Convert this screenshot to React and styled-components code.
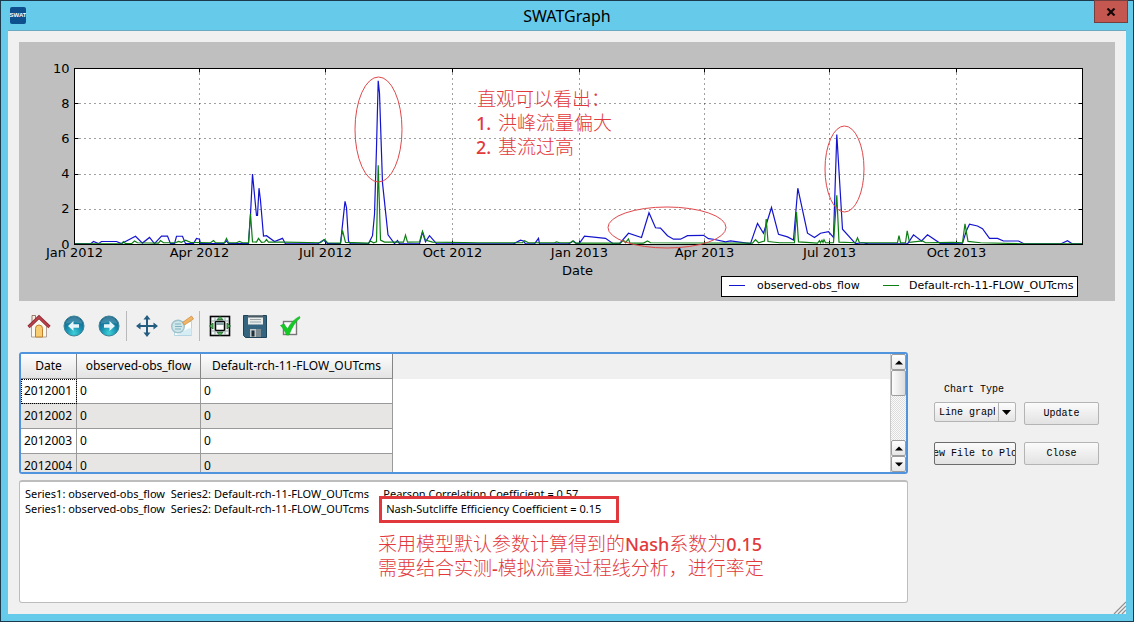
import React from "react";
import styled, { createGlobalStyle, css } from "styled-components";

const uiFont = `"Noto Sans", "Noto Sans CJK SC", sans-serif`;
const monoFont = `"Liberation Mono", "Noto Sans CJK SC", monospace`;

const GlobalStyle = createGlobalStyle`
  *, *::before, *::after { box-sizing: border-box; }
  body { margin: 0; background: #66cbea; font-family: ${uiFont}; color: #000; }
`;

const Window = styled.div`
  min-height: 100vh;
  display: flex;
  flex-direction: column;
  padding: 0 7px 7px;
  background: #66cbea;
  border: 1px solid #1b3a4d;
`;

const TitleBar = styled.header`
  position: relative;
  height: 29px;
  display: flex;
  align-items: center;
  justify-content: center;
`;

const AppIcon = styled.svg`
  position: absolute;
  left: 2px;
  top: 6px;
`;

const Title = styled.h1`
  margin: 0;
  font-size: 16px;
  font-weight: 400;
  line-height: 20px;
`;

const CloseBox = styled.button`
  position: absolute;
  top: -1px;
  right: -2px;
  width: 34px;
  height: 23px;
  padding: 0;
  display: grid;
  place-items: center;
  background: #c4574f;
  border: 1px solid #74403f;
`;

const Client = styled.main`
  position: relative;
  flex: 1;
  display: flex;
  flex-direction: column;
  padding: 11px;
  background: #f0f0f0;
  border-top: 1px solid #6ba9c2;
`;

const ChartSvg = styled.svg`
  display: block;
  width: 100%;
  height: auto;
  background: #bfbfbf;
  font-family: "DejaVu Sans", sans-serif;
`;

const Note = styled.text`
  font-family: "Noto Sans CJK SC", sans-serif;
  font-size: 19px;
  font-weight: 300;
  fill: #e2393c;
`;

const NoteLatin = styled.tspan`
  font-family: "Noto Sans", sans-serif;
  font-size: 18px;
  font-weight: 500;
`;

const ToolBar = styled.div`
  display: flex;
  align-items: center;
  height: 51px;
  padding: 0 0 1px 2px;
`;

const ToolButton = styled.button`
  width: 35px;
  height: 30px;
  padding: 0;
  border: 0;
  background: none;
  display: grid;
  place-items: center;
`;

const ToolDivider = styled.span`
  width: 3px;
  height: 30px;
  border-left: 1px solid #b9b9b9;
`;

const Lower = styled.div`
  flex: 1;
  display: grid;
  grid-template-columns: minmax(0, 1fr) 165px;
  column-gap: 26px;
  padding-right: 16px;
`;

const Panels = styled.div`
  display: flex;
  flex-direction: column;
  gap: 6px;
`;

const TablePanel = styled.div`
  display: flex;
  height: 122px;
  overflow: hidden;
  background: #fff;
  border: 2px solid #4f94dd;
  border-radius: 3px;
`;

const TableClip = styled.div`
  flex: 1;
  overflow: hidden;
`;

const DataTable = styled.table`
  width: 100%;
  table-layout: fixed;
  border-collapse: separate;
  border-spacing: 0;
  font-size: 12px;
  line-height: 16px;
`;

const HeadCell = styled.th`
  width: ${(p) => p.$width || "auto"};
  height: 25px;
  padding: 0;
  font-size: 12px;
  font-weight: 400;
  white-space: nowrap;
  background: linear-gradient(#fdfdfd, #e3e3e3);
  border-right: 1px solid #858585;
  border-bottom: 1px solid #8f8f8f;
  ${(p) =>
    p.$blank &&
    css`
      background: #f0f0f0;
      border: 0;
    `}
`;

const Cell = styled.td`
  height: 25px;
  padding: 0 3px;
  background: ${(p) => (p.$alt ? "#e8e6e4" : "#fff")};
  border-right: 1px solid #9a9a9a;
  border-bottom: 1px solid #9a9a9a;
  ${(p) =>
    p.$focused &&
    css`
      outline: 1px dotted #000;
      outline-offset: -1px;
    `}
`;

const ScrollBar = styled.div`
  width: 16px;
  display: flex;
  flex-direction: column;
  background: repeating-conic-gradient(#dcdcdc 0 25%, #fafafa 0 50%) 0 0 / 2px 2px;
  border-left: 1px solid #c8c8c8;
`;

const ScrollButton = styled.button`
  height: 16px;
  padding: 0;
  display: grid;
  place-items: center;
  background: linear-gradient(#fff, #e6e6e6);
  border: 1px solid #9c9c9c;
  border-radius: 2px;
`;

const Thumb = styled.div`
  height: 26px;
  margin-bottom: auto;
  background: linear-gradient(90deg, #fcfcfc, #dcdcdc);
  border: 1px solid #9c9c9c;
  border-radius: 2px;
`;

const LogPanel = styled.div`
  position: relative;
  flex: 1;
  min-height: 123px;
  display: flex;
`;

const LogText = styled.textarea`
  flex: 1;
  padding: 4px 5px;
  resize: none;
  overflow: hidden;
  white-space: pre;
  font-family: ${uiFont};
  font-size: 11px;
  line-height: 15px;
  color: #000;
  background: #fff;
  border: 1px solid #bdbdbd;
  border-top-width: 2px;
  border-radius: 3px;
  outline: 0;
`;

const Highlight = styled.div`
  position: absolute;
  left: 360px;
  top: 16px;
  width: 240px;
  height: 27px;
  border: 3px solid #e0383c;
`;

const LogNote = styled.svg`
  position: absolute;
  left: 356px;
  top: 51px;
  overflow: visible;
`;

const Controls = styled.form`
  display: grid;
  grid-template-columns: 82px 75px;
  grid-template-rows: 43px 23px;
  column-gap: 8px;
  row-gap: 17px;
  align-content: start;
  align-items: end;
  padding-top: 30px;
  font-family: ${monoFont};
  font-size: 10px;
`;

const Field = styled.div`
  align-self: start;
  display: flex;
  flex-direction: column;
  gap: 4px;
`;

const FieldLabel = styled.label`
  padding-left: 10px;
  line-height: 16px;
`;

const Combo = styled.div`
  position: relative;
  height: 20px;
`;

const ComboSelect = styled.select`
  appearance: none;
  display: block;
  width: 100%;
  height: 20px;
  padding: 0 20px 0 4px;
  font-family: ${monoFont};
  font-size: 10px;
  color: #000;
  background: linear-gradient(#fdfdfd, #e4e4e4);
  border: 1px solid #b4b4b4;
  border-radius: 2px;
`;

const ComboArrow = styled.svg`
  position: absolute;
  right: 1px;
  top: 1px;
  pointer-events: none;
`;

const PushButton = styled.button`
  height: 23px;
  padding: 0;
  display: flex;
  align-items: center;
  justify-content: center;
  overflow: hidden;
  white-space: nowrap;
  font-family: ${monoFont};
  font-size: 10px;
  color: #000;
  background: linear-gradient(#fbfbfb, #e2e2e2);
  border: 1px solid ${(p) => (p.$primary ? "#6c6c6c" : "#b4b4b4")};
  border-radius: 2px;
`;

const SizeGrip = styled.svg`
  position: absolute;
  right: 0;
  bottom: 0;
`;

/* Horizontal positions are plot pixels from the left axis, values are m3/s. */
const observed = [
  [0, 0.05], [16, 0.03], [19, 0.17], [24, 0.05], [27, 0.17], [42, 0.17], [47, 0.05], [51, 0.17],
  [61, 0.47], [68, 0.08], [75, 0.4], [80, 0.05], [87, 0.48], [93, 0.48], [96, 0.05], [100, 0.05],
  [102, 0.47], [108, 0.47], [111, 0.05], [119, 0.05], [122, 0.34], [125, 0.3], [126, 0.05],
  [149, 0.05], [152, 0.2], [154, 0.05], [174, 0.05], [176, 1.7], [178, 4], [182, 1.65], [183, 1.65],
  [184.5, 3.2], [186, 2.5], [189, 0.48], [192, 0.5], [200, 0.17], [208, 0.35], [211, 0.03],
  [243, 0.03], [249, 0.25], [253, 0.05], [266, 0.05], [270.5, 2.45], [272, 2.1], [274, 0.2],
  [276, 0.04], [294, 0.05], [298, 0.5], [300, 1.7], [302, 5.5], [303.7, 9.3], [305, 8.6],
  [308, 3.5], [313.5, 0.55], [320, 0.05], [323, 0.23], [325, 0.04], [345, 0.04], [348, 0.7],
  [351, 0.15], [355, 0.5], [362, 0.05], [439, 0.04], [446, 0.25], [449, 0.2], [451, 0.04],
  [460, 0.04], [464, 0.35], [465, 0.04], [494, 0.04], [499, 0.2], [502, 0.05], [505, 0.08],
  [510, 0.47], [531, 0.35], [539, 0.03], [545, 0.05], [554, 0.64], [567, 0.4], [574.5, 1.8],
  [581, 0.95], [586, 0.93], [593, 0.5], [599, 0.3], [606, 0.3], [613, 0.5], [629, 0.52],
  [634, 0.33], [639, 0.3], [651, 0.15], [656, 0.2], [676, 0.05], [683, 1.2], [689, 0.64],
  [697, 2.1], [704, 0.58], [713, 0.43], [719, 0.25], [723.3, 3.2], [733, 0.64], [740, 0.4],
  [746, 0.64], [754, 0.73], [759, 0.4], [762.3, 6.25], [768, 0.87], [781, 0.05], [788, 0.1],
  [794, 0.04], [833, 0.04], [839, 0.55], [847, 0.2], [853, 0.55], [866, 0.05], [888, 0.08],
  [892, 0.8], [895, 1.15], [903, 1.05], [908, 0.9], [915, 0.35], [923, 0.35], [929, 0.2],
  [944, 0.2], [950, 0.03], [986, 0.03], [993, 0.22], [998, 0.03], [1008, 0.03],
];

const simulated = [
  [0, 0.03], [47, 0.05], [49, 0.17], [51, 0.05], [57, 0.05], [60, 0.2], [63, 0.1], [84, 0.08],
  [86, 0.22], [89, 0.1], [101, 0.1], [104, 0.18], [107, 0.12], [111, 0.25], [116, 0.12],
  [136, 0.1], [139, 0.22], [141, 0.1], [150, 0.1], [152, 0.35], [154, 0.1], [162, 0.1],
  [165, 0.17], [168, 0.1], [174, 0.1], [176, 1.75], [178, 0.15], [182, 0.14], [184, 0.35],
  [187, 0.12], [190, 0.14], [192, 0.28], [194, 0.14], [209, 0.14], [246, 0.1], [250, 0.28],
  [253, 0.1], [266, 0.08], [268, 0.8], [271, 0.12], [294, 0.08], [296, 0.2], [299, 0.1],
  [302, 0.15], [303.7, 4.5], [306, 0.25], [310, 0.14], [329, 0.13], [331, 0.53], [333, 0.13],
  [345, 0.15], [348, 0.75], [351, 0.25], [358, 0.14], [404, 0.1], [448, 0.1], [450, 0.22],
  [454, 0.1], [480, 0.1], [482, 0.15], [485, 0.1], [496, 0.1], [498, 0.2], [501, 0.08],
  [546, 0.08], [549, 0.25], [551, 0.1], [554, 0.32], [555.5, 0.08], [569, 0.08], [573, 0.2],
  [576, 0.1], [678, 0.08], [681, 0.28], [684, 0.1], [690, 0.2], [691.7, 1.45], [693.5, 0.17],
  [705, 0.1], [720, 0.1], [722, 1.85], [724, 0.15], [743, 0.08], [745, 0.22], [746, 0.1],
  [747.5, 0.24], [748.5, 0.12], [749.5, 0.27], [751, 0.1], [759, 0.1], [762.3, 2.8], [764.5, 0.13],
  [781, 0.1], [783, 0.38], [785, 0.1], [823, 0.1], [824.5, 0.5], [826, 0.1], [831, 0.1],
  [832.7, 0.78], [835, 0.12], [848, 0.2], [851, 0.1], [878, 0.12], [888, 0.1], [890.5, 1.18],
  [893.5, 0.18], [906, 0.1], [949, 0.04], [1008, 0.03],
];

const toPoints = (series) => series.map(([x, v]) => `${x},${176 - v * 17.6}`).join(" ");

const months = [
  [0, "Jan 2012"], [125, "Apr 2012"], [251, "Jul 2012"], [378, "Oct 2012"],
  [505, "Jan 2013"], [630, "Apr 2013"], [755, "Jul 2013"], [882, "Oct 2013"],
];

function Chart() {
  return (
    <ChartSvg viewBox="0 0 1096 259" role="img" aria-label="Observed and simulated flow by date">
      <g transform="translate(55.5 26.5)">
        <rect width="1008" height="176" fill="#fff" />
        {[2, 4, 6, 8].map((v) => (
          <g key={v} transform={`translate(0 ${Math.round(176 - v * 17.6)})`} stroke="#000">
            <path d="M0 0H1008" strokeWidth="1" strokeDasharray="1 4" strokeOpacity="0.75" />
            <path d="M0 0H4M1004 0H1008" />
          </g>
        ))}
        {months.slice(1).map(([x, label]) => (
          <g key={label} transform={`translate(${x} 0)`} stroke="#000">
            <path d="M0 0V176" strokeDasharray="1 4" strokeOpacity="0.75" />
            <path d="M0 0V4M0 172V176" />
          </g>
        ))}
        <polyline points={toPoints(observed)} fill="none" stroke="#1414cf" strokeWidth="1.2" />
        <polyline points={toPoints(simulated)} fill="none" stroke="#0d7f14" strokeWidth="1.2" />
        <rect width="1008" height="176" fill="none" stroke="#000" strokeWidth="1" />
        <g fontSize="13" textAnchor="end">
          {[0, 2, 4, 6, 8, 10].map((v) => (
            <text key={v} x="-5" y={180 - v * 17.6}>{v}</text>
          ))}
        </g>
        <g fontSize="13" textAnchor="middle">
          {months.map(([x, label]) => (
            <text key={label} x={x} y="188">{label}</text>
          ))}
          <text x="503" y="206">Date</text>
        </g>
      </g>
      <g fontSize="11">
        <rect x="702.5" y="234.5" width="356" height="20" fill="#fff" stroke="#000" />
        <path d="M710 243.500H726" stroke="#1414cf" />
        <text x="738" y="247">observed-obs_flow</text>
        <path d="M864 243.500H880" stroke="#0d7f14" />
        <text x="890" y="247">Default-rch-11-FLOW_OUTcms</text>
      </g>
      <g fill="none" stroke="#e0484b">
        <ellipse cx="359.500" cy="87.500" rx="23.500" ry="52.500" />
        <ellipse cx="648" cy="185.500" rx="59" ry="20.500" />
        <ellipse cx="825.500" cy="127" rx="19.500" ry="43" />
      </g>
      <Note x="458" y="64">直观可以看出：</Note>
      <Note x="457" y="88"><NoteLatin>1.</NoteLatin><tspan x="479">洪峰流量偏大</tspan></Note>
      <Note x="457" y="112"><NoteLatin>2.</NoteLatin><tspan x="479">基流过高</tspan></Note>
    </ChartSvg>
  );
}

const Icon = ({ children }) => (
  <svg width="26" height="26" viewBox="0 0 26 26" aria-hidden="true">{children}</svg>
);

const Globe = ({ flip }) => (
  <Icon>
    <defs>
      <radialGradient id={flip ? "discR" : "discL"} cx="0.5" cy="0.85" r="0.75">
        <stop offset="0" stopColor="#3fd0d8" />
        <stop offset="0.55" stopColor="#168cae" />
        <stop offset="1" stopColor="#0f6288" />
      </radialGradient>
    </defs>
    <circle cx="13" cy="13" r="10" fill={`url(#${flip ? "discR" : "discL"})`} stroke="#3d8296" />
    <path d="M4.500 11a8.600 8.600 0 0 1 17 0c-5-2-12-2-17 0z" fill="#fff" opacity="0.18" />
    <path
      transform={flip ? "matrix(-1 0 0 1 26 0)" : undefined}
      d="M7 13l5.500-5v3.200H18v3.600h-5.500V18z"
      fill="#e6f6fa"
    />
  </Icon>
);

const icons = {
  home: (
    <Icon>
      <path d="M6 2.500h3.500v7H6z" fill="#f8eee2" stroke="#7c5d52" strokeWidth="0.8" />
      <path d="M5.500 13L13 5.500l7.500 7.500v11h-15z" fill="#fbf8f2" stroke="#a08c7c" strokeWidth="0.8" />
      <path d="M9.500 24v-8.500a3.500 3.500 0 0 1 7 0V24z" fill="#f8cd72" stroke="#c0812c" />
      <path d="M2.500 14L13 4l10.500 10" fill="none" stroke="#8d2f38" strokeWidth="3.200" />
      <path d="M2.800 14L13 4.200 23.200 14" fill="none" stroke="#c0414a" strokeWidth="1.600" />
    </Icon>
  ),
  move: (
    <Icon>
      <path d="M13 4v18M4 13h18" stroke="#235d80" strokeWidth="2" />
      <path
        d="M13 2l3.500 4.500h-7zM13 24l3.500-4.500h-7zM2 13l4.500-3.500v7zM24 13l-4.500-3.500v7z"
        fill="#235d80"
      />
    </Icon>
  ),
  zoom: (
    <Icon>
      <path d="M5.500 8.500h17v14h-17z" fill="#fdfefe" stroke="#b5d5e2" />
      <path d="M7 22c5-1 7-6 15.500-7v7z" fill="#d7edf5" />
      <circle cx="9" cy="13.500" r="6.300" fill="#cfe6ea" stroke="#9dc2cb" strokeWidth="1.400" />
      <path d="M6 11h6M6 13.500h7M6 16h6" stroke="#7fb2bf" />
      <path d="M13.500 9.500L22.500 3l2 3-9 6z" fill="#f0b566" stroke="#cd8a3a" strokeWidth="0.700" />
    </Icon>
  ),
  subplots: (
    <Icon>
      <rect x="3.500" y="3.500" width="19" height="19" fill="#f5f9f9" stroke="#050505" strokeWidth="1.600" />
      <path d="M8 4v18M18 4v18M4 8h18M4 18h18" stroke="#93a5a4" />
      <rect x="8.500" y="8.500" width="9" height="9" rx="1" fill="#fff" stroke="#050505" strokeWidth="1.500" />
      <path d="M9 9h8v3H9z" fill="#88a0a2" />
      <path
        d="M13 3.500l3 3.200h-6zM13 22.500l3-3.200h-6zM2.500 13L6 10v6zM23.500 13L20 10v6z"
        fill="#5cb562"
        stroke="#155d21"
        strokeWidth="0.800"
      />
    </Icon>
  ),
  save: (
    <Icon>
      <path d="M1.500 2.500h23v22h-21l-2-2z" fill="#34647f" stroke="#1d4357" />
      <path d="M6 2.500h15v9H6z" fill="#e7eceb" />
      <path d="M6 2.500h15v2H6z" fill="#4a5a62" />
      <path d="M8 6.500h11M8 9h11" stroke="#98a4a6" />
      <path d="M8 16h11v8H8z" fill="#c0c8ca" />
      <path d="M9.500 17.500h3v6h-3z" fill="#20313b" />
      <path d="M14 16h5v8h-5z" fill="#7c8b92" />
    </Icon>
  ),
  edit: (
    <Icon>
      <rect x="6.500" y="8.500" width="13" height="13" fill="#fbfbfb" stroke="#777" strokeWidth="1.400" />
      <path d="M3.500 12.500l3.500-1.500 3.500 5C13.500 10 17.500 6 22.500 3.500l.5 1.500c-5 4-8 9.500-11 17H9.500c-1.500-4-3.500-7-6-9.500z" fill="#14cb26" stroke="#0bab1c" strokeWidth="0.600" />
    </Icon>
  ),
};

const tools = [
  ["Home", icons.home],
  ["Back", <Globe key="b" />],
  ["Forward", <Globe key="f" flip />],
  null,
  ["Pan", icons.move],
  ["Zoom", icons.zoom],
  null,
  ["Subplots", icons.subplots],
  ["Save", icons.save],
  ["Edit", icons.edit],
];

const Triangle = ({ down }) => (
  <svg width="8" height="5" viewBox="0 0 8 5" aria-hidden="true">
    <path d={down ? "M0 0.500h8L4 4.500z" : "M0 4.500h8L4 0.500z"} />
  </svg>
);

const rows = ["2012001", "2012002", "2012003", "2012004"];

const logLines = [
  "Series1: observed-obs_flow  Series2: Default-rch-11-FLOW_OUTcms     Pearson Correlation Coefficient = 0.57",
  "Series1: observed-obs_flow  Series2: Default-rch-11-FLOW_OUTcms      Nash-Sutcliffe Efficiency Coefficient = 0.15",
].join("\n");

export default function App() {
  return (
    <>
      <GlobalStyle />
      <Window>
        <TitleBar>
          <AppIcon width="16" height="17" viewBox="0 0 16 17">
            <rect width="16" height="17" rx="2" fill="#0e4f8d" />
            <text x="8" y="10" textAnchor="middle" fontSize="6" fontWeight="700" fill="#fff" fontFamily="Liberation Sans, sans-serif">SWAT</text>
          </AppIcon>
          <Title>SWATGraph</Title>
          <CloseBox type="button" aria-label="Close window">
            <svg width="10" height="8" viewBox="0 0 10 8">
              <path d="M1.500 0.500l7 7M8.500 0.500l-7 7" stroke="#160808" strokeWidth="2.200" />
            </svg>
          </CloseBox>
        </TitleBar>
        <Client>
          <Chart />
          <ToolBar role="toolbar" aria-label="Chart tools">
            {tools.map((tool, i) =>
              tool ? (
                <ToolButton key={i} type="button" aria-label={tool[0]}>{tool[1]}</ToolButton>
              ) : (
                <ToolDivider key={i} />
              )
            )}
          </ToolBar>
          <Lower>
            <Panels>
              <TablePanel>
                <TableClip>
                  <DataTable>
                    <thead>
                      <tr>
                        <HeadCell $width="56px">Date</HeadCell>
                        <HeadCell $width="124px">observed-obs_flow</HeadCell>
                        <HeadCell $width="192px">Default-rch-11-FLOW_OUTcms</HeadCell>
                        <HeadCell as="td" $blank />
                      </tr>
                    </thead>
                    <tbody>
                      {rows.map((day, i) => (
                        <tr key={day}>
                          <Cell $alt={i % 2 === 1} $focused={i === 0}>{day}</Cell>
                          <Cell $alt={i % 2 === 1}>0</Cell>
                          <Cell $alt={i % 2 === 1}>0</Cell>
                        </tr>
                      ))}
                    </tbody>
                  </DataTable>
                </TableClip>
                <ScrollBar>
                  <ScrollButton type="button" aria-label="Scroll up"><Triangle /></ScrollButton>
                  <Thumb />
                  <ScrollButton type="button" aria-label="Page up"><Triangle /></ScrollButton>
                  <ScrollButton type="button" aria-label="Scroll down"><Triangle down /></ScrollButton>
                </ScrollBar>
              </TablePanel>
              <LogPanel>
                <LogText aria-label="Statistics" readOnly value={logLines} />
                <Highlight />
                <LogNote width="390" height="52">
                  <Note x="3" y="20">采用模型默认参数计算得到的<NoteLatin>Nash</NoteLatin>系数为<NoteLatin>0.15</NoteLatin></Note>
                  <Note x="3" y="44">需要结合实测<NoteLatin>-</NoteLatin>模拟流量过程线分析，进行率定</Note>
                </LogNote>
              </LogPanel>
            </Panels>
            <Controls onSubmit={(e) => e.preventDefault()}>
              <Field>
                <FieldLabel htmlFor="chart-type">Chart Type</FieldLabel>
                <Combo>
                  <ComboSelect id="chart-type" defaultValue="line">
                    <option value="line">Line graph</option>
                    <option value="bar">Bar chart</option>
                  </ComboSelect>
                  <ComboArrow width="17" height="18" viewBox="0 0 17 18">
                    <path d="M0.500 0v18" stroke="#b4b4b4" />
                    <path d="M4 7h9l-4.500 5z" />
                  </ComboArrow>
                </Combo>
              </Field>
              <PushButton type="button">Update</PushButton>
              <PushButton type="button" $primary>New File to Plot</PushButton>
              <PushButton type="button">Close</PushButton>
            </Controls>
          </Lower>
          <SizeGrip width="13" height="13" viewBox="0 0 13 13">
            <path d="M1 13L13 1M5 13l8-8M9 13l4-4" stroke="#8f8f8f" strokeWidth="1.200" />
          </SizeGrip>
        </Client>
      </Window>
    </>
  );
}
